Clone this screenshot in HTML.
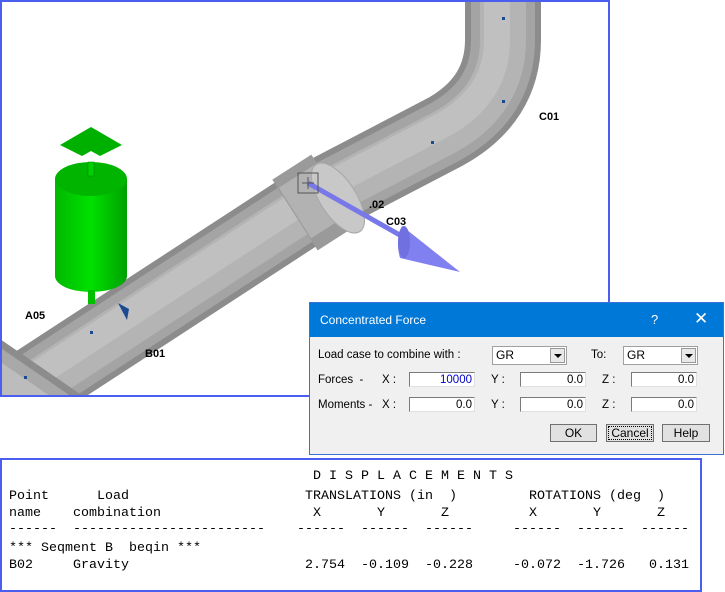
<!DOCTYPE html>
<html><head><meta charset="utf-8"><style>
body{margin:0;width:725px;height:592px;background:#fff;position:relative;overflow:hidden;font-family:"Liberation Sans",sans-serif}
.lbl{position:absolute;font:bold 11px "Liberation Sans",sans-serif;color:#000}
#dlg{position:absolute;left:309px;top:302px;width:413px;height:151px;background:#f0f0f0;border:1px solid #3a72d8;}
#tb{height:34px;background:#0078d7;color:#fff;font-size:12px;position:relative}
.t{position:absolute;font-size:11.5px;color:#000}
.inp{position:absolute;height:15px;background:#fff;border:1px solid #7a7a7a;border-right-color:#e0e0e0;border-bottom-color:#e0e0e0;font-size:11.5px;text-align:right;line-height:15px;padding-right:2px;box-sizing:border-box}
.cb{position:absolute;height:19px;background:#fff;border:1px solid #a0a0a0;box-sizing:border-box;font-size:12px;line-height:17px;padding-left:3px}
.cb i{position:absolute;right:1px;top:1px;width:15px;height:15px;background:#e8e8e8;border:1px solid #999;box-sizing:border-box}
.cb i:after{content:"";position:absolute;left:3px;top:5px;border-left:4px solid transparent;border-right:4px solid transparent;border-top:4px solid #000}
.btn{position:absolute;top:424px;height:18px;background:#e1e1e1;border:1px solid #707070;box-sizing:border-box;font-size:12px;text-align:center;line-height:16px}
#out{position:absolute;left:0;top:458px;width:698px;height:130px;border:2px solid #4a5ef0;border-top-width:2px}
.m{position:absolute;font:13.33px "Liberation Mono",monospace;color:#000;white-space:pre;line-height:14px}
</style></head><body>
<svg width="725" height="400" style="position:absolute;left:0;top:0">
<defs>
<linearGradient id="gg" x1="0" x2="1"><stop offset="0" stop-color="#00b800"/><stop offset=".5" stop-color="#00e000"/><stop offset="1" stop-color="#00a000"/></linearGradient>
<clipPath id="cl"><rect x="2" y="2" width="606" height="393"/></clipPath>
</defs>
<g clip-path="url(#cl)" fill="none" stroke-linecap="butt">
<path d="M-20,420 L330,192 L445,132 Q503,100 503,40 L503,-20" stroke="#8c8c8c" stroke-width="76"/>
<path d="M-20,420 L330,192 L445,132 Q503,100 503,40 L503,-20" stroke="#a4a4a4" stroke-width="64"/>
<path d="M-20,420 L330,192 L445,132 Q503,100 503,40 L503,-20" stroke="#b4b4b4" stroke-width="46"/>
<path d="M-24,414 L326,186 L441,126 Q497,96 497,40 L497,-20" stroke="#c0c0c0" stroke-width="26"/>
<path d="M-40,360 L120,470" stroke="#8c8c8c" stroke-width="80"/>
<path d="M-40,360 L120,470" stroke="#a8a8a8" stroke-width="66"/>
<path d="M-40,356 L120,466" stroke="#bcbcbc" stroke-width="36"/>
<path d="M295,215 L334,190" stroke="#9a9a9a" stroke-width="84"/>
<path d="M295,213 L334,188" stroke="#b2b2b2" stroke-width="60"/>
<ellipse cx="338" cy="198" rx="18" ry="40" transform="rotate(-33 338 198)" fill="#c8c8c8" stroke="#a8a8a8"/>
</g>
<rect x="1" y="1" width="608" height="395" fill="none" stroke="#4a5ef0" stroke-width="2"/>
<polygon points="91,127 122,145 100,156 91,151 82,156 60,145" fill="#00b000"/>
<rect x="55" y="179" width="72" height="97" fill="url(#gg)"/>
<ellipse cx="91" cy="276" rx="36" ry="16" fill="url(#gg)"/>
<ellipse cx="91" cy="179" rx="36" ry="17" fill="#00b400"/>
<rect x="88" y="162" width="6" height="14" fill="#00d000" stroke="#008000" stroke-width=".5"/>
<rect x="88" y="290" width="7" height="14" fill="#00c000"/>
<line x1="308" y1="183" x2="405" y2="238" stroke="#7878e8" stroke-width="5"/>
<path d="M402,226 L460,272 L400,258 Q395,240 402,226Z" fill="#8080f0"/>
<ellipse cx="404" cy="242" rx="6" ry="16" fill="#7070e0"/>
<rect x="298" y="173" width="20" height="20" fill="none" stroke="#555" stroke-width="1"/>
<line x1="302" y1="183" x2="314" y2="183" stroke="#555"/><line x1="308" y1="177" x2="308" y2="189" stroke="#555"/>
<polygon points="118,303 129,309 127,320" fill="#1a4a90"/>
<g fill="#1a4a90"><rect x="502" y="17" width="3" height="3"/><rect x="502" y="100" width="3" height="3"/><rect x="431" y="141" width="3" height="3"/><rect x="90" y="331" width="3" height="3"/><rect x="24" y="376" width="3" height="3"/></g>
</svg>
<div class="lbl" style="left:539px;top:111px">C01</div>
<div class="lbl" style="left:369px;top:199px">.02</div>
<div class="lbl" style="left:386px;top:216px">C03</div>
<div class="lbl" style="left:25px;top:310px">A05</div>
<div class="lbl" style="left:145px;top:348px">B01</div>

<div id="dlg"><div id="tb"><span style="position:absolute;left:10px;top:10px">Concentrated Force</span><span style="position:absolute;left:341px;top:9px;font-size:13px">?</span><span style="position:absolute;left:384px;top:6px;font-size:17px">✕</span></div></div>
<div class="t" style="left:318px;top:349px">Load case to combine with :</div>
<div class="cb" style="left:492px;top:346px;width:75px">GR<i></i></div>
<div class="t" style="left:591px;top:349px">To:</div>
<div class="cb" style="left:623px;top:346px;width:75px">GR<i></i></div>
<div class="t" style="left:318px;top:374px">Forces&nbsp; -</div>
<div class="t" style="left:318px;top:399px">Moments -</div>
<div class="t" style="left:382px;top:374px">X :</div><div class="t" style="left:382px;top:399px">X :</div>
<div class="t" style="left:491px;top:374px">Y :</div><div class="t" style="left:491px;top:399px">Y :</div>
<div class="t" style="left:602px;top:374px">Z :</div><div class="t" style="left:602px;top:399px">Z :</div>
<div class="inp" style="left:409px;top:372px;width:66px;color:#00c">10000</div>
<div class="inp" style="left:520px;top:372px;width:66px">0.0</div>
<div class="inp" style="left:631px;top:372px;width:66px">0.0</div>
<div class="inp" style="left:409px;top:397px;width:66px">0.0</div>
<div class="inp" style="left:520px;top:397px;width:66px">0.0</div>
<div class="inp" style="left:631px;top:397px;width:66px">0.0</div>
<div class="btn" style="left:550px;width:47px">OK</div>
<div class="btn" style="left:606px;width:48px;outline:1px dotted #000;outline-offset:-3px">Cancel</div>
<div class="btn" style="left:662px;width:48px">Help</div>

<div id="out"></div>
<div class="m" style="left:313px;top:470px">D I S P L A C E M E N T S</div>
<div class="m" style="left:9px;top:490px">Point</div><div class="m" style="left:97px;top:490px">Load</div>
<div class="m" style="left:305px;top:490px">TRANSLATIONS (in  )</div><div class="m" style="left:529px;top:490px">ROTATIONS (deg  )</div>
<div class="m" style="left:9px;top:507px">name</div><div class="m" style="left:73px;top:507px">combination</div>
<div class="m" style="left:313px;top:507px">X</div><div class="m" style="left:377px;top:507px">Y</div><div class="m" style="left:441px;top:507px">Z</div>
<div class="m" style="left:529px;top:507px">X</div><div class="m" style="left:593px;top:507px">Y</div><div class="m" style="left:657px;top:507px">Z</div>
<div class="m" style="left:9px;top:523px">------</div><div class="m" style="left:73px;top:523px">------------------------</div>
<div class="m" style="left:297px;top:523px">------</div><div class="m" style="left:361px;top:523px">------</div><div class="m" style="left:425px;top:523px">------</div>
<div class="m" style="left:513px;top:523px">------</div><div class="m" style="left:577px;top:523px">------</div><div class="m" style="left:641px;top:523px">------</div>
<div class="m" style="left:9px;top:542px">*** Seqment B  beqin ***</div>
<div class="m" style="left:9px;top:559px">B02</div><div class="m" style="left:73px;top:559px">Gravity</div>
<div class="m" style="left:305px;top:559px">2.754</div><div class="m" style="left:361px;top:559px">-0.109</div><div class="m" style="left:425px;top:559px">-0.228</div>
<div class="m" style="left:513px;top:559px">-0.072</div><div class="m" style="left:577px;top:559px">-1.726</div><div class="m" style="left:649px;top:559px">0.131</div>
</body></html>
